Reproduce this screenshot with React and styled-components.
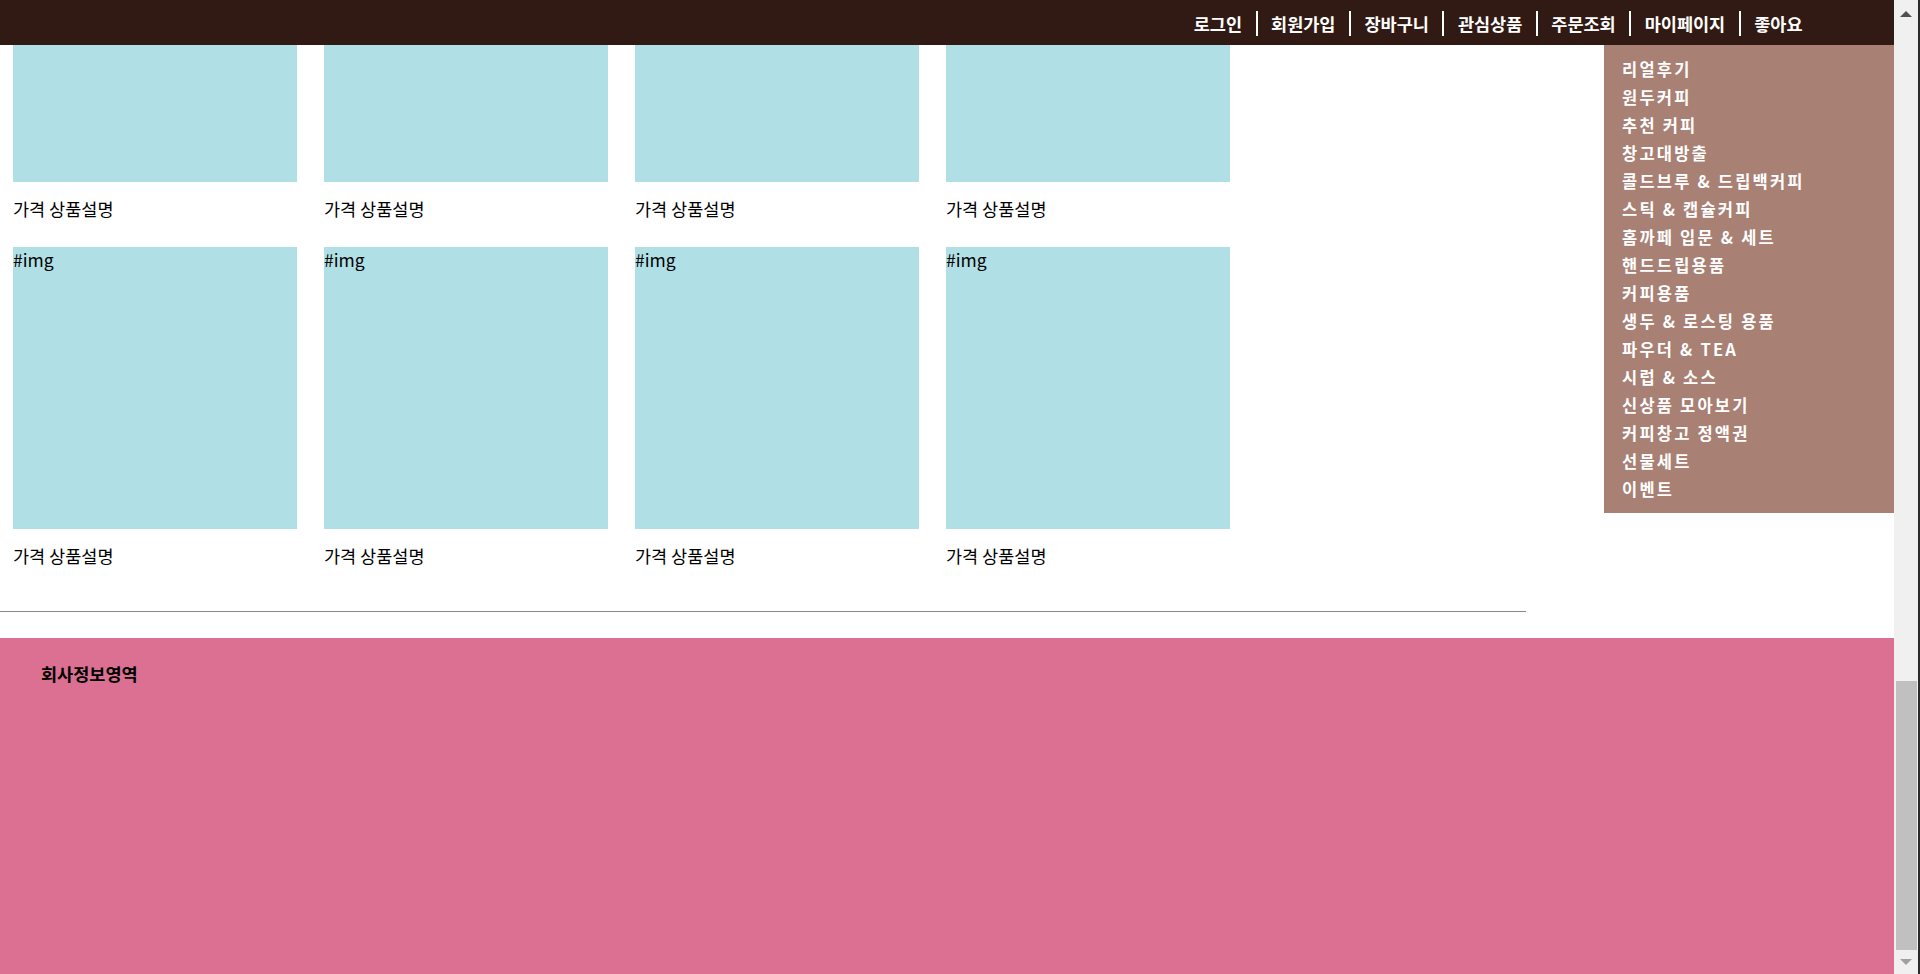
import React from 'react';
import styled, { createGlobalStyle } from 'styled-components';

const menu = ['로그인', '회원가입', '장바구니', '관심상품', '주문조회', '마이페이지', '좋아요'];

const categories = [
  '리얼후기',
  '원두커피',
  '추천 커피',
  '창고대방출',
  '콜드브루 & 드립백커피',
  '스틱 & 캡슐커피',
  '홈까페 입문 & 세트',
  '핸드드립용품',
  '커피용품',
  '생두 & 로스팅 용품',
  '파우더 & TEA',
  '시럽 & 소스',
  '신상품 모아보기',
  '커피창고 정액권',
  '선물세트',
  '이벤트',
];

const products = Array.from({ length: 8 }, (_, i) => i);

export default function App() {
  return (
    <Window>
      <GlobalStyle />
      <Viewport>
        <TopBar>
          <TopMenu>
            {menu.map(item => (
              <TopItem key={item}>{item}</TopItem>
            ))}
          </TopMenu>
        </TopBar>

        {/* page is shown scrolled to its bottom: overflow is clipped at the top */}
        <ScrollArea>
          <Main>
            <ProductGrid>
              {products.map(i => (
                <Card key={i}>
                  <Thumb>#img</Thumb>
                  <Caption>가격 상품설명</Caption>
                </Card>
              ))}
            </ProductGrid>
            <Divider />
          </Main>
          <Footer>
            <FooterTitle>회사정보영역</FooterTitle>
          </Footer>
        </ScrollArea>

        <SideMenu>
          {categories.map(item => (
            <SideItem key={item}>{item}</SideItem>
          ))}
        </SideMenu>
      </Viewport>

      <ScrollBar>
        <ArrowButton $dir="up" />
        <Track>
          <Handle />
        </Track>
        <ArrowButton $dir="down" />
      </ScrollBar>
    </Window>
  );
}

const GlobalStyle = createGlobalStyle`
  html, body {
    margin: 0;
    height: 100%;
    overflow: hidden;
  }

  body {
    font-family: "Noto Sans CJK KR", "Noto Sans", sans-serif;
    color: #000;
    background: #fff;
  }
`;

const Window = styled.div`
  display: flex;
  height: 100vh;
  overflow: hidden;
`;

const Viewport = styled.div`
  position: relative;
  flex: 1;
  min-width: 0;
  display: flex;
  flex-direction: column;
  overflow: hidden;
`;

const TopBar = styled.header`
  flex: none;
  height: 45px;
  background: #321a14;
  display: flex;
  justify-content: flex-end;
  align-items: center;
`;

const TopMenu = styled.ul`
  display: flex;
  align-items: center;
  list-style: none;
  margin: 2px 78px 0 0;
  padding: 0;
`;

const TopItem = styled.li`
  padding: 0 13.5px;
  line-height: 25px;
  font-size: 17.5px;
  font-weight: 700;
  color: #fff;
  cursor: pointer;

  & + & {
    border-left: 2px solid #fff;
  }
`;

const ScrollArea = styled.div`
  flex: 1;
  min-height: 0;
  display: flex;
  flex-direction: column;
  justify-content: flex-end;
  overflow: hidden;
`;

const SideMenu = styled.ul`
  position: absolute;
  top: 45px;
  right: 0;
  width: 290px;
  margin: 0;
  padding: 10px 0;
  list-style: none;
  background: #a88074;
`;

const SideItem = styled.li`
  padding-left: 18px;
  line-height: 28px;
  font-size: 16.5px;
  font-weight: 700;
  letter-spacing: 2.2px;
  color: #fff;
  white-space: nowrap;
  cursor: pointer;
`;

const Main = styled.main`
  flex: none;
  width: 1526px;
`;

const ProductGrid = styled.div`
  display: grid;
  grid-template-columns: repeat(4, 284px);
  column-gap: 27px;
  padding-left: 13px;
`;

const Card = styled.div`
  display: flex;
  flex-direction: column;
`;

const Thumb = styled.div`
  height: 282px;
  background: #b0e0e6;
  font-size: 17.5px;
  line-height: 26px;
`;

const Caption = styled.p`
  margin: 16px 0 28px;
  font-size: 17.5px;
  line-height: 21px;
`;

const Divider = styled.hr`
  height: 1px;
  margin: 17px 0 26px;
  border: 0;
  background: #888;
`;

const Footer = styled.footer`
  flex: none;
  height: 336px;
  padding: 24px 41px;
  box-sizing: border-box;
  background: #db7093;
`;

const FooterTitle = styled.h4`
  margin: 0;
  font-size: 17.5px;
  line-height: 24px;
  font-weight: 700;
`;

const ScrollBar = styled.aside`
  flex: none;
  width: 24px;
  display: flex;
  flex-direction: column;
  background: #f0f0f0;
  border-right: 2px solid #2b2b2b;
`;

const ArrowButton = styled.div`
  flex: none;
  height: 22px;
  display: flex;
  justify-content: center;
  align-items: flex-start;
  box-sizing: border-box;
  padding-top: ${p => (p.$dir === 'up' ? '11px' : '7px')};

  &::before {
    content: '';
    width: 0;
    height: 0;
    border-left: 6px solid transparent;
    border-right: 6px solid transparent;
    ${p =>
      p.$dir === 'up'
        ? 'border-bottom: 6px solid #505050;'
        : 'border-top: 6px solid #a0a0a0;'}
  }
`;

const Track = styled.div`
  flex: 1;
  display: flex;
  flex-direction: column;
  justify-content: flex-end;
  padding: 0 1px 2px 2px;
`;

const Handle = styled.div`
  height: 269px;
  background: #c0c0c0;
`;
